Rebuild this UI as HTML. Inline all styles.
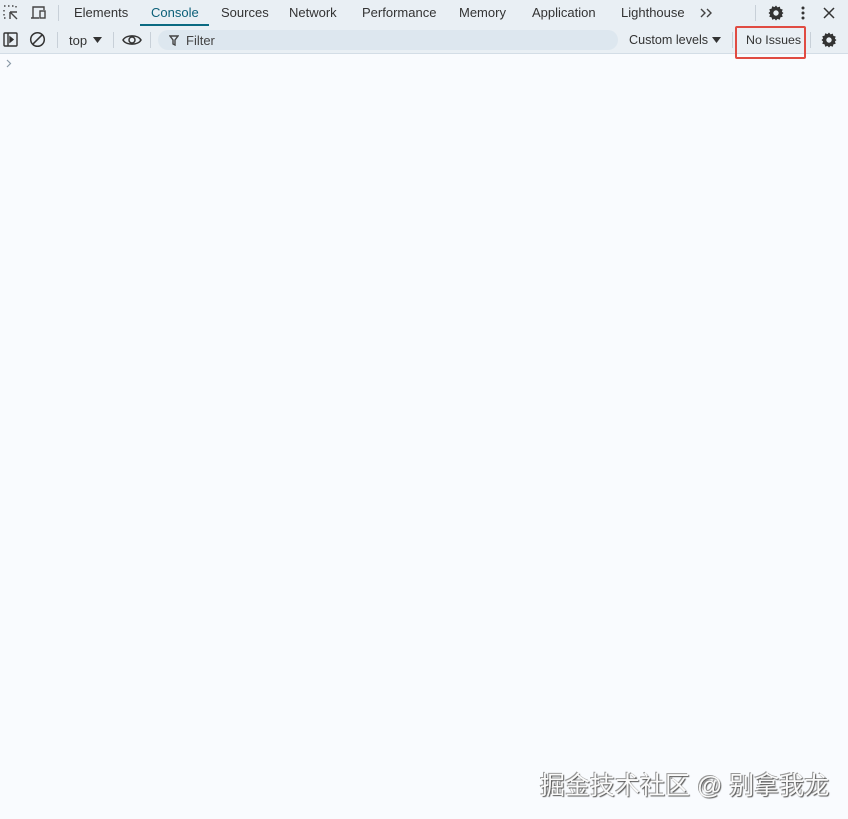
<!DOCTYPE html>
<html><head><meta charset="utf-8"><style>
body{margin:0;width:848px;height:819px;background:#f9fbfe;font-family:"Liberation Sans","Noto Sans CJK SC",sans-serif;font-size:13px;color:#1f1f1f;position:relative;overflow:hidden}
.bar1{position:absolute;left:0;top:0;width:848px;height:26px;background:#e9eff4;}
.bar2{position:absolute;left:0;top:26px;width:848px;height:27px;background:#e9eff4;border-bottom:1px solid #d3dde6}
.t{position:absolute;top:5px;font-size:13px;color:#333}
.sep{position:absolute;width:1px;background:#c8d0d8}
svg{position:absolute}
</style></head><body>
<div class="bar1">
<svg style="left:3px;top:5px" width="16" height="16" viewBox="0 0 16 16" fill="none" stroke="#444" stroke-width="1.4"><path d="M1 1h2M5 1h2M9 1h2M1 5v2M1 9v2M1 13h2M13 1v2" stroke-dasharray="1.5 1.5"/><path d="M7 7l7 0M7 7l0 7M7 7l7 7"/></svg>
<svg style="left:30px;top:5px" width="18" height="16" viewBox="0 0 18 16" fill="none" stroke="#444" stroke-width="1.4"><path d="M3 13V2h11v3M1 13h8"/><rect x="10" y="6" width="5" height="7"/></svg>
<div class="sep" style="left:58px;top:5px;height:16px"></div>
<span class="t" style="left:74px">Elements</span>
<span class="t" style="left:151px;color:#0b5f78">Console</span>
<div style="position:absolute;left:140px;top:24px;width:69px;height:2px;background:#0b6a82"></div>
<span class="t" style="left:221px">Sources</span>
<span class="t" style="left:289px">Network</span>
<span class="t" style="left:362px">Performance</span>
<span class="t" style="left:459px">Memory</span>
<span class="t" style="left:532px">Application</span>
<span class="t" style="left:621px">Lighthouse</span>
<svg style="left:700px;top:8px" width="13" height="10" viewBox="0 0 13 10" fill="none" stroke="#444" stroke-width="1.4"><path d="M1 1l4 4-4 4M7 1l4 4-4 4"/></svg>
<div class="sep" style="left:755px;top:5px;height:16px"></div>
<svg style="left:767px;top:4px" width="18" height="18" viewBox="0 0 18 18"><path fill="#333" fill-rule="evenodd" d="M9 1.5l1.5 1.9 2.3-.8.6 2.3 2.3.6-.8 2.3L16.5 9l-1.6 1.5.8 2.3-2.3.6-.6 2.3-2.3-.8L9 16.5l-1.5-1.6-2.3.8-.6-2.3-2.3-.6.8-2.3L1.5 9l1.6-1.5-.8-2.3 2.3-.6.6-2.3 2.3.8zM9 6.3a2.7 2.7 0 100 5.4 2.7 2.7 0 100-5.4z"/></svg>
<svg style="left:801px;top:5px" width="4" height="16" viewBox="0 0 4 16" fill="#333"><circle cx="2" cy="3" r="1.5"/><circle cx="2" cy="8" r="1.5"/><circle cx="2" cy="13" r="1.5"/></svg>
<svg style="left:823px;top:7px" width="12" height="12" viewBox="0 0 12 12" stroke="#333" stroke-width="1.5"><path d="M1 1l10 10M11 1L1 11"/></svg>
</div>
<div class="bar2">
<svg style="left:3px;top:6px" width="15" height="15" viewBox="0 0 15 15" fill="none" stroke="#333" stroke-width="1.4"><rect x="1" y="1" width="13" height="13" rx="1"/><path d="M5 1v13"/><path d="M7 5l3 2.5-3 2.5z" fill="#333"/></svg>
<svg style="left:29px;top:5px" width="17" height="17" viewBox="0 0 17 17" fill="none" stroke="#333" stroke-width="1.5"><circle cx="8.5" cy="8.5" r="6.8"/><path d="M3.8 13.2L13.2 3.8"/></svg>
<div class="sep" style="left:57px;top:6px;height:16px"></div>
<span class="t" style="left:69px;top:7px">top</span>
<svg style="left:93px;top:11px" width="9" height="6" viewBox="0 0 9 6" fill="#333"><path d="M0 0h9L4.5 6z"/></svg>
<div class="sep" style="left:113px;top:6px;height:16px"></div>
<svg style="left:122px;top:7px" width="20" height="14" viewBox="0 0 20 14" fill="none" stroke="#333" stroke-width="1.5"><path d="M1 7C4 1.5 16 1.5 19 7 16 12.5 4 12.5 1 7z"/><circle cx="10" cy="7" r="3"/></svg>
<div class="sep" style="left:150px;top:6px;height:16px"></div>
<div style="position:absolute;left:158px;top:4px;width:460px;height:20px;border-radius:10px;background:#dde7ef"></div>
<svg style="left:169px;top:9px" width="10" height="11" viewBox="0 0 10 11" fill="none" stroke="#444" stroke-width="1.4"><path d="M1 1h8L6 5v5L4 9V5z"/></svg>
<span class="t" style="left:186px;top:7px;color:#444">Filter</span>
<span class="t" style="left:629px;top:7px;font-size:12.6px">Custom levels</span>
<svg style="left:712px;top:11px" width="9" height="6" viewBox="0 0 9 6" fill="#333"><path d="M0 0h9L4.5 6z"/></svg>
<div class="sep" style="left:732px;top:6px;height:16px"></div>
<div style="position:absolute;left:735px;top:0px;width:67px;height:29px;border:2px solid #e04b42;border-radius:2px"></div>
<span class="t" style="left:746px;top:7px;font-size:12.4px">No Issues</span>
<div class="sep" style="left:810px;top:6px;height:16px"></div>
<svg style="left:820px;top:5px" width="18" height="18" viewBox="0 0 18 18"><path fill="#333" fill-rule="evenodd" d="M9 1.5l1.5 1.9 2.3-.8.6 2.3 2.3.6-.8 2.3L16.5 9l-1.6 1.5.8 2.3-2.3.6-.6 2.3-2.3-.8L9 16.5l-1.5-1.6-2.3.8-.6-2.3-2.3-.6.8-2.3L1.5 9l1.6-1.5-.8-2.3 2.3-.6.6-2.3 2.3.8zM9 6.3a2.7 2.7 0 100 5.4 2.7 2.7 0 100-5.4z"/></svg>
</div>
<svg style="left:6px;top:59px" width="6" height="9" viewBox="0 0 6 9" fill="none" stroke="#8a9aa8" stroke-width="1.2"><path d="M1 1l3.5 3.5L1 8"/></svg>
<div style="position:absolute;left:540px;top:766px;font-size:25px;color:#fafafa;text-shadow:1px 1px 1px #555,-1px -1px 0 #999;white-space:nowrap">掘金技术社区 @ 别拿我龙</div>
</body></html>
